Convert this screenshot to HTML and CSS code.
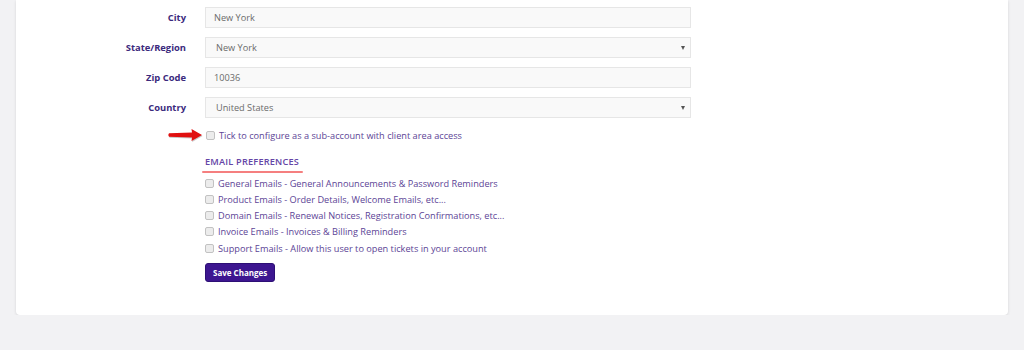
FILE: index.html
```html
<!DOCTYPE html>
<html>
<head>
<meta charset="utf-8">
<link rel="stylesheet" href="styles.css">
</head>
<body>
<div class="card">
  <div class="form">
    <label class="lbl">City</label>
    <div class="field">New York</div>
    <label class="lbl">State/Region</label>
    <div class="field select">New York<span class="caret"></span></div>
    <label class="lbl">Zip Code</label>
    <div class="field">10036</div>
    <label class="lbl">Country</label>
    <div class="field select">United States<span class="caret"></span></div>
  </div>
  <div class="extra">
    <div class="check sub">
      <svg class="arrow" width="38" height="14" viewBox="0 0 38 14">
        <path d="M2 5.2 L25 4.6 L24.5 1 L35 7 L24.5 13 L25 9.4 L2 8.8 Q0.5 7 2 5.2 Z" fill="#c9c9c9" transform="translate(0.6,1)"/>
        <path d="M2 5.2 L25 4.6 L24.5 1 L35 7 L24.5 13 L25 9.4 L2 8.8 Q0.5 7 2 5.2 Z" fill="#e01010"/>
      </svg>
      <span class="box"></span>Tick to configure as a sub-account with client area access
    </div>
    <div class="heading">EMAIL PREFERENCES</div>
    <div class="list">
      <div class="check"><span class="box"></span>General Emails - General Announcements &amp; Password Reminders</div>
      <div class="check"><span class="box"></span>Product Emails - Order Details, Welcome Emails, etc...</div>
      <div class="check"><span class="box"></span>Domain Emails - Renewal Notices, Registration Confirmations, etc...</div>
      <div class="check"><span class="box"></span>Invoice Emails - Invoices &amp; Billing Reminders</div>
      <div class="check"><span class="box"></span>Support Emails - Allow this user to open tickets in your account</div>
    </div>
    <button class="btn">Save Changes</button>
  </div>
</div>
</body>
</html>
```
FILE: styles.css
```css
html, body {
  margin: 0;
  padding: 0;
  background: #f2f2f4;
  font-family: "Open Sans", "DejaVu Sans", sans-serif;
}
.card {
  margin: 0 16px;
  background: #fff;
  border-radius: 0 0 4px 4px;
  box-shadow: 0 1px 3px rgba(0,0,0,0.12);
  padding: 7px 0 33px 0;
}
.form {
  display: grid;
  grid-template-columns: 170px 486px;
  column-gap: 19px;
  row-gap: 9px;
}
.lbl {
  justify-self: end;
  align-self: center;
  font-size: 9.4px;
  font-weight: 700;
  color: #3b2a7d;
}
.field {
  position: relative;
  height: 19px;
  line-height: 19px;
  background: #f9f9f9;
  border: 1px solid #e6e6e6;
  padding-left: 8px;
  font-size: 9.2px;
  color: #6b6b6b;
}
.select { padding-left: 10px; }
.caret {
  position: absolute;
  right: 5px;
  top: 8px;
  width: 0;
  height: 0;
  border-left: 2.5px solid transparent;
  border-right: 2.5px solid transparent;
  border-top: 4px solid #555;
}
.extra {
  margin-left: 189px;
  padding-top: 9px;
  display: flex;
  flex-direction: column;
  align-items: flex-start;
}
.check {
  position: relative;
  display: flex;
  align-items: center;
  height: 16px;
  font-size: 9.2px;
  color: #5c4496;
  white-space: nowrap;
}
.box {
  width: 7px;
  height: 7px;
  margin: 0 4px 0 0;
  border: 1px solid #c2c2c2;
  border-radius: 2px;
  background: #ececec;
}
.sub .box { margin-left: 1px; }
.arrow {
  position: absolute;
  left: -38px;
  top: 1px;
}
.heading {
  margin-top: 12px;
  padding: 0 0 3px 0;
  font-size: 9.2px;
  font-weight: 600;
  color: #6445a6;
  letter-spacing: 0.2px;
  position: relative;
}
.heading::after {
  content: "";
  position: absolute;
  left: -3px;
  right: -4px;
  bottom: -2px;
  height: 2.5px;
  background: #f57f7f;
  border-radius: 1px;
}
.list {
  margin-top: 4px;
  display: flex;
  flex-direction: column;
  gap: 0.3px;
}
.btn {
  margin-top: 7px;
  height: 19px;
  padding: 0 7px;
  background: #3d1690;
  border: 1px solid #2d0f75;
  border-radius: 3px;
  color: #fff;
  font-family: inherit;
  font-size: 8px;
  font-weight: 700;
}
```
